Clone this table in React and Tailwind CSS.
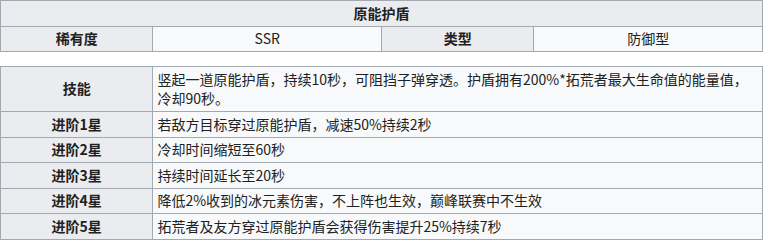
import React from 'react';

const th = 'border border-[#a2a9b1] bg-[#eaecf0] px-1 py-[2.5px] text-center font-bold';
const td = 'border border-[#a2a9b1] bg-[#f8f9fa] px-1 py-[2.5px]';

const rows = [
  ['技能', '竖起一道原能护盾，持续10秒，可阻挡子弹穿透。护盾拥有200%*拓荒者最大生命值的能量值，冷却90秒。'],
  ['进阶1星', '若敌方目标穿过原能护盾，减速50%持续2秒'],
  ['进阶2星', '冷却时间缩短至60秒'],
  ['进阶3星', '持续时间延长至20秒'],
  ['进阶4星', '降低2%收到的冰元素伤害，不上阵也生效，巅峰联赛中不生效'],
  ['进阶5星', '拓荒者及友方穿过原能护盾会获得伤害提升25%持续7秒'],
];

const App = () => {
  return (
    <div className="w-[763px] h-[240px] bg-white text-[14px] leading-[19.5px] text-[#202122] font-['Noto_Sans_CJK_SC',sans-serif]">
      {/* basic info */}
      <table className="w-full table-fixed border-collapse">
        <colgroup>
          <col className="w-[20%]" />
          <col className="w-[30%]" />
          <col className="w-[20%]" />
          <col className="w-[30%]" />
        </colgroup>
        <tbody>
          <tr>
            <th colSpan={4} className={th}>原能护盾</th>
          </tr>
          <tr>
            <th className={th}>稀有度</th>
            <td className={`${td} text-center`}>SSR</td>
            <th className={th}>类型</th>
            <td className={`${td} text-center`}>防御型</td>
          </tr>
        </tbody>
      </table>

      {/* skill table */}
      <table className="mt-[14px] w-full table-fixed border-collapse">
        <colgroup>
          <col className="w-[20%]" />
          <col className="w-[80%]" />
        </colgroup>
        <tbody>
          {rows.map(([k, v]) => (
            <tr key={k}>
              <th className={th}>{k}</th>
              <td className={`${td} text-left`}>{v}</td>
            </tr>
          ))}
        </tbody>
      </table>
    </div>
  );
};

export default App;
